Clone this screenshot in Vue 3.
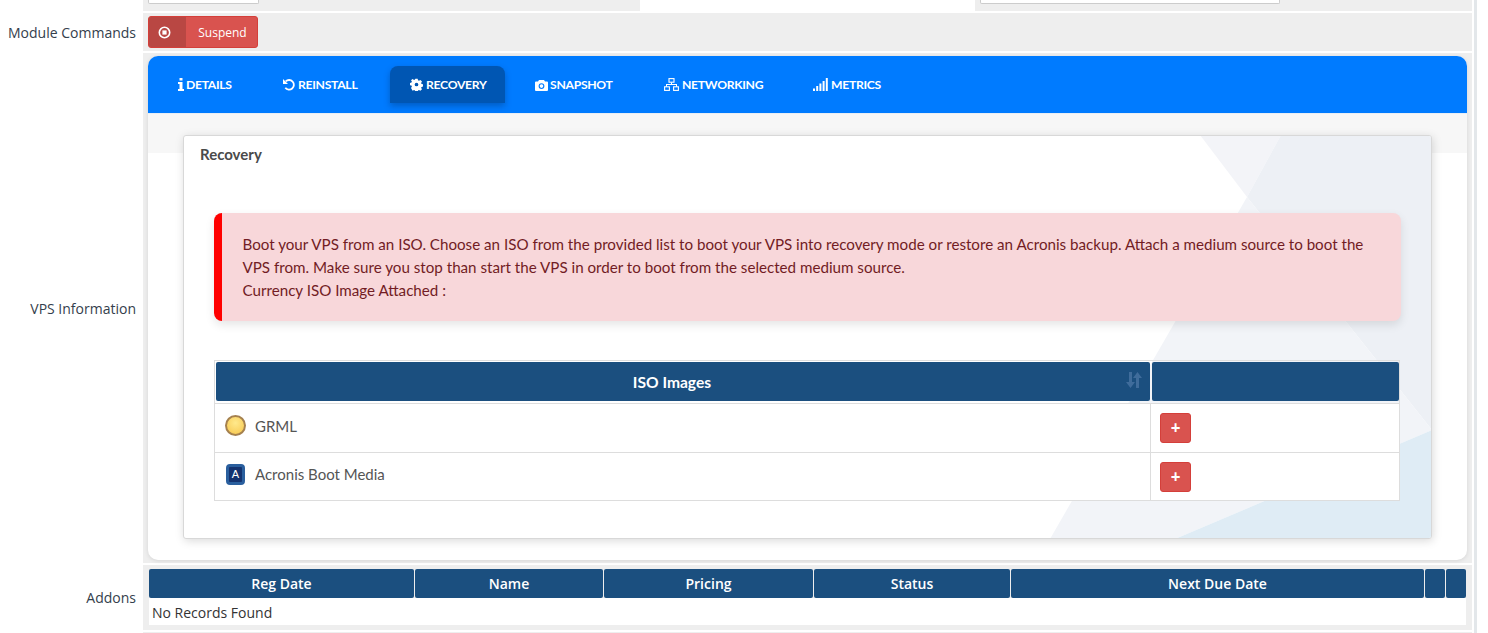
<script setup>
const addonCols = ['Reg Date', 'Name', 'Pricing', 'Status', 'Next Due Date', '', '']
const isos = [
  { name: 'GRML', kind: 'grml' },
  { name: 'Acronis Boot Media', kind: 'acronis' }
]
</script>

<template>
  <div class="page">
    <div class="main">
      <div class="row top-row">
        <div class="label"></div>
        <div class="top-cell">
          <div class="top-gray first"><div class="stub stub-a"></div></div>
          <div class="top-white"></div>
          <div class="top-gray last"><div class="stub stub-b"></div></div>
        </div>
      </div>

      <div class="row cmd-row">
        <div class="label low">Module Commands</div>
        <div class="cell cmd-cell">
          <button class="suspend">
            <span class="suspend-icon">
              <svg width="13" height="13" viewBox="0 0 13 13"><circle cx="6.5" cy="6.5" r="5.2" fill="none" stroke="#fff" stroke-width="1.6"/><rect x="4.4" y="4.4" width="4.2" height="4.2" fill="#fff"/></svg>
            </span>
            <span class="suspend-text">Suspend</span>
          </button>
        </div>
      </div>

      <div class="row vps-row">
        <div class="label low">VPS Information</div>
        <div class="cell vps-cell">
          <div class="panel">
            <nav class="tabs">
              <a class="tab t-details">
                <svg width="6" height="13" viewBox="0 0 6 13"><path fill="#fff" d="M1.500 0h3v2.600h-3zM0 4h4.500v7H6v2H0v-2h1.500V6H0z"/></svg>
                DETAILS
              </a>
              <a class="tab t-reinstall">
                <svg width="12" height="13" viewBox="0 0 12 13"><path fill="none" stroke="#fff" stroke-width="1.800" d="M2.700 3.400A4.800 4.800 0 1 1 2.300 9.800"/><path fill="#fff" d="M0 1v5h5z"/></svg>
                REINSTALL
              </a>
              <a class="tab active t-recovery">
                <svg width="13" height="13" viewBox="0 0 13 13"><path fill="#fff" fill-rule="evenodd" d="M5.200 0h2.600l.4 1.800 1.100.5 1.600-1 1.800 1.800-1 1.600.5 1.100 1.800.4v2.600l-1.800.4-.5 1.100 1 1.600-1.800 1.800-1.600-1-1.100.5-.4 1.800H5.200l-.4-1.800-1.100-.5-1.600 1L.3 10.400l1-1.600-.5-1.100L-1 7.300V4.700l1.800-.4.5-1.100-1-1.600L2.100.3l1.600 1 1.100-.5zM6.500 4.400a2.100 2.100 0 1 0 0 4.200 2.100 2.100 0 1 0 0-4.200z" transform="translate(.75 .75) scale(.885)"/></svg>
                RECOVERY
              </a>
              <a class="tab t-snapshot">
                <svg width="13" height="12" viewBox="0 0 13 12"><path fill="#fff" fill-rule="evenodd" d="M4 1h5l1 1.600h2a1 1 0 0 1 1 1V11a1 1 0 0 1-1 1H1a1 1 0 0 1-1-1V3.600a1 1 0 0 1 1-1h2zM6.500 4.200a2.900 2.900 0 1 0 0 5.800 2.900 2.900 0 1 0 0-5.800zM6.500 5.300a1.800 1.800 0 1 1 0 3.600 1.800 1.800 0 1 1 0-3.600z"/></svg>
                SNAPSHOT
              </a>
              <a class="tab t-networking">
                <svg width="15" height="13" viewBox="0 0 15 13"><g fill="none" stroke="#fff" stroke-width="1.100"><rect x="5" y=".6" width="5" height="3.600"/><rect x=".6" y="8.800" width="4.800" height="3.600"/><rect x="9.600" y="8.800" width="4.800" height="3.600"/></g><path fill="#fff" d="M7 4.500h1V6h5v2.800h-1V7H3v1.800H2V6h5z"/></svg>
                NETWORKING
              </a>
              <a class="tab t-metrics">
                <svg width="15" height="13" viewBox="0 0 15 13"><path fill="#fff" d="M0 10.500h2V13H0zM3.200 8h2v5h-2zM6.400 5.500h2V13h-2zM9.600 3h2v10h-2zM12.800 0h2v13h-2z"/></svg>
                METRICS
              </a>
            </nav>

            <div class="panel-body">
              <section class="card">
                <svg class="card-bg" width="1249" height="404" viewBox="0 0 1249 404" preserveAspectRatio="none">
                  <polygon fill="#f3f4f8" points="1017,0 1098,0 1064,62"/>
                  <polygon fill="#edf0f5" points="1098,0 1249,0 1249,295 1064,62"/>
                  <polygon fill="#f2f4f8" points="1064,62 1249,295 992,404 867,404"/>
                  <polygon fill="#dfecf5" points="1249,295 1249,404 992,404"/>
                </svg>
                <h3 class="card-title">Recovery</h3>
                <div class="alert">
                  Boot your VPS from an ISO. Choose an ISO from the provided list to boot your VPS into recovery mode or restore an Acronis backup. Attach a medium source to boot the VPS from. Make sure you stop than start the VPS in order to boot from the selected medium source.<br>
                  Currency ISO Image Attached :
                </div>
                <div class="iso-table">
                  <div class="iso-head iso-head-main">
                    ISO Images
                    <svg class="sort" width="16" height="16" viewBox="0 0 16 16"><path fill="#3f6c9b" d="M3 0h3v10h3l-4.500 6L0 10h3zM11.500 0L16 6h-3v10h-3V6H7z"/></svg>
                  </div>
                  <div class="iso-head iso-head-end"></div>
                  <template v-for="iso in isos" :key="iso.name">
                    <div class="iso-cell iso-name">
                      <span v-if="iso.kind === 'grml'" class="ball"></span>
                      <span v-else class="acronis">A</span>
                      <span>{{ iso.name }}</span>
                    </div>
                    <div class="iso-cell iso-action"><button class="plus">+</button></div>
                  </template>
                </div>
              </section>
            </div>
          </div>
        </div>
      </div>

      <div class="row addons-row">
        <div class="label">Addons</div>
        <div class="cell addons-cell">
          <div class="addons-head">
            <div v-for="(c, i) in addonCols" :key="i" class="addons-th">{{ c }}</div>
          </div>
          <div class="addons-empty">No Records Found</div>
        </div>
      </div>
      <div class="row bottom-row"><div class="label"></div><div class="cell"></div></div>
    </div>
    <div class="side-line"></div>
  </div>
</template>

<style>
html, body { margin: 0; background: #fff; overflow: hidden; }
</style>

<style scoped>
.page {
  width: 1488px;
  height: 633px;
  overflow: hidden;
  display: flex;
  font-family: "Open Sans", "Liberation Sans", sans-serif;
  font-size: 14px;
  color: #333;
}
.main { width: 1472px; display: flex; flex-direction: column; }
.side-line { width: 3px; margin-left: 2px; background: #e3e7ea; }
.row { display: grid; grid-template-columns: 143px 1fr; flex: none; }
.label {
  text-align: right;
  padding-right: 7px;
  align-self: center;
  color: #34404c;
  line-height: 20px;
}
.low { padding-top: 2px; }
.cell { background: #eee; }

.top-row { height: 11px; margin-bottom: 2px; }
.top-cell { display: flex; }
.top-gray { background: #eee; overflow: hidden; }
.first { width: 492px; padding-left: 5px; }
.top-white { width: 335px; }
.last { flex: 1; padding-left: 5px; }
.stub { height: 3px; background: #fff; border: 1px solid #ccc; border-top: 0; border-radius: 0 0 2px 2px; }
.stub-a { width: 109px; }
.stub-b { width: 298px; }

.cmd-row { height: 38px; margin-bottom: 2px; }
.cmd-cell { padding: 3px 5px; }
.suspend {
  display: flex;
  width: 110px;
  height: 32px;
  padding: 0;
  border: 1px solid #d43f3a;
  border-radius: 3px;
  background: #d9534f;
  color: #fff;
  font: 12px "Open Sans", sans-serif;
  overflow: hidden;
}
.suspend-icon { width: 37px; height: 100%; background: #b94743; display: flex; align-items: center; justify-content: center; padding-right: 6px; box-sizing: border-box; }
.suspend-text { flex: 1; line-height: 32px; text-align: center; padding-left: 2px; }

.vps-row { height: 510px; margin-bottom: 2px; }
.vps-cell { padding: 3px 5px; }
.panel {
  height: 504px;
  background: #fff;
  border-radius: 10px;
  overflow: hidden;
  box-shadow: 0 1px 4px rgba(0, 0, 0, .1);
  font-family: Lato, "Open Sans", sans-serif;
}
.tabs {
  height: 58px;
  padding-left: 10px;
  background: #007bff;
  border-bottom: 1px solid #e8eef5;
  box-sizing: border-box;
  display: flex;
  gap: 10px;
  align-items: flex-start;
}
.tab {
  height: 37px;
  margin-top: 10px;
  padding: 0 20px;
  display: flex;
  align-items: center;
  gap: 3px;
  color: #fff;
  font-size: 12.2px;
  font-weight: 700;
  letter-spacing: -0.3px;
  white-space: nowrap;
  border-radius: 8px 8px 0 0;
  box-sizing: border-box;
}
.tab svg { flex: none; }
.t-details { width: 95px; gap: 2px; }
.t-reinstall { width: 117px; }
.t-recovery { width: 115px; }
.t-snapshot { width: 119px; gap: 2px; }
.t-networking { width: 139px; }
.t-metrics { width: 108px; }
.active { background: #0056b3; box-shadow: 0 3px 6px rgba(0, 40, 90, .35); }

.panel-body {
  background: linear-gradient(#f7f7f7 39px, #fff 39px);
  padding: 21px 35px 0;
}
.card {
  position: relative;
  height: 404px;
  box-sizing: border-box;
  background: #fff;
  border: 1px solid #d8d8d8;
  border-radius: 3px;
  box-shadow: 1px 2px 10px rgba(0, 0, 0, .15);
  padding: 0 29px 0 30px;
  overflow: hidden;
}
.card-bg { position: absolute; left: -1px; top: -1px; }
.card-title {
  position: relative;
  margin: 0 0 0 -14px;
  padding-top: 8px;
  height: 77px;
  box-sizing: border-box;
  font-size: 15px;
  font-weight: 700;
  line-height: 20px;
  color: #4a4a4a;
}
.alert {
  position: relative;
  width: 1187px;
  height: 108px;
  box-sizing: border-box;
  padding: 20px 20px 0 20.500px;
  background: #f8d7da;
  border-left: 8px solid #f00;
  border-radius: 8px;
  color: #721c24;
  font-size: 15.16px;
  line-height: 23px;
  box-shadow: 0 4px 10px rgba(0, 0, 0, .1);
}
.iso-table {
  position: relative;
  margin-top: 39px;
  width: 1186px;
  display: grid;
  grid-template-columns: 936px 248px;
  grid-template-rows: 42px 49px 48px;
  box-sizing: border-box;
  border: 1px solid #ddd;
}
.iso-head {
  background: #1b4f7f;
  margin: 1px 1px 2px 1px;
  color: #fff;
  font-weight: 700;
  font-size: 15.6px;
  display: flex;
  align-items: center;
  justify-content: center;
  border-radius: 2px;
  position: relative;
}
.iso-head-main { padding-right: 22px; }
.iso-head-end { margin-right: 0; }
.sort { position: absolute; right: 8px; top: 10px; }
.iso-cell { background: #fff; border-top: 1px solid #ddd; box-sizing: border-box; display: flex; align-items: center; }
.iso-name { border-right: 1px solid #ddd; color: #555; font-size: 15px; padding: 0 0 5px 10px; gap: 9px; }
.iso-action { padding-left: 9px; }
.ball {
  width: 21px;
  height: 21px;
  box-sizing: border-box;
  border-radius: 50%;
  border: 2px solid #a5814f;
  background: radial-gradient(circle at 50% 35%, #ffe98c, #f7c64c);
}
.acronis {
  width: 19px;
  height: 21px;
  margin: 0 1px;
  box-sizing: border-box;
  border-radius: 4px;
  border: 3px solid #2a5f9e;
  background: #14336f;
  color: #fff;
  font: 400 11px/15px "Liberation Sans", sans-serif;
  text-align: center;
}
.plus {
  width: 31px;
  height: 30px;
  padding: 0;
  background: #d9534f;
  border: 1px solid #d43f3a;
  border-radius: 3px;
  color: #fff;
  font: 700 17px/26px "Open Sans", sans-serif;
}

.addons-row { height: 65px; margin-bottom: 2px; }
.addons-cell { padding: 4px 6px 5px 6px; }
.addons-head {
  display: grid;
  grid-template-columns: 265px 188px 209px 196px 413px 20px 20px;
  column-gap: 1px;
  height: 28px;
}
.addons-th {
  background: #1b4f7f;
  color: #fff;
  font-weight: 600;
  font-size: 14px;
  line-height: 29px;
  text-align: center;
  border-radius: 2px;
}
.addons-empty { margin-top: 1px; background: #fff; height: 27px; line-height: 29px; padding-left: 3px; color: #333; }
.bottom-row { height: 10px; }
</style>
